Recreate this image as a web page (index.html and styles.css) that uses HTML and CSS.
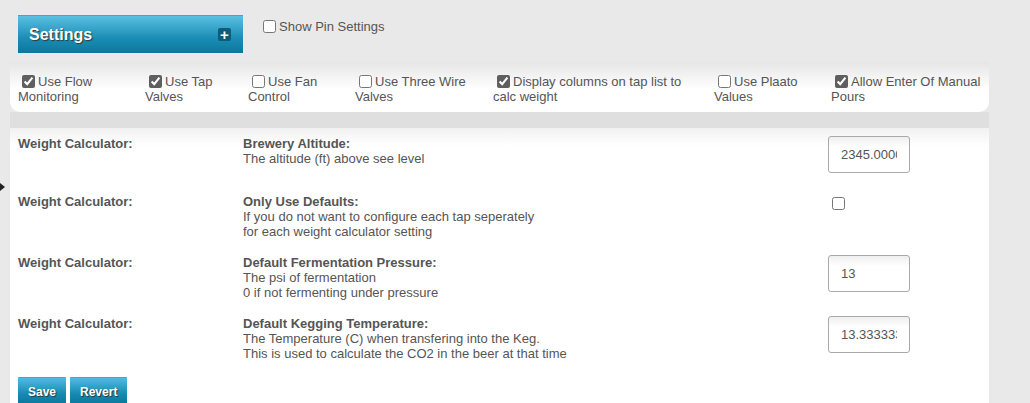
FILE: index.html
```html
<!DOCTYPE html>
<html>
<head>
    <title>Settings</title>
    <link rel="stylesheet" href="styles.css">
</head>
<body>
    <span class="pointer"></span>
    <div class="top-row">
        <div class="settings-bar">
            <span>Settings</span>
            <span class="plus">+</span>
        </div>
        <label class="pin-toggle"><input type="checkbox">Show Pin Settings</label>
    </div>

    <div class="panel">
        <div class="options">
            <label class="option"><input type="checkbox" checked>Use Flow Monitoring</label>
            <label class="option"><input type="checkbox" checked>Use Tap Valves</label>
            <label class="option"><input type="checkbox">Use Fan Control</label>
            <label class="option"><input type="checkbox">Use Three Wire Valves</label>
            <label class="option"><input type="checkbox" checked>Display columns on tap list to calc weight</label>
            <label class="option"><input type="checkbox">Use Plaato Values</label>
            <label class="option"><input type="checkbox" checked>Allow Enter Of Manual Pours</label>
        </div>
        <div class="divider"></div>
        <div class="content">
            <div class="config">
                <div class="config-group">Weight Calculator:</div>
                <div class="config-desc">
                    <b>Brewery Altitude:</b><br>
                    The altitude (ft) above see level
                </div>
                <div class="config-value"><input type="text" class="field" value="2345.0000"></div>

                <div class="config-group">Weight Calculator:</div>
                <div class="config-desc">
                    <b>Only Use Defaults:</b><br>
                    If you do not want to configure each tap seperately<br>
                    for each weight calculator setting
                </div>
                <div class="config-value"><input type="checkbox"></div>

                <div class="config-group">Weight Calculator:</div>
                <div class="config-desc">
                    <b>Default Fermentation Pressure:</b><br>
                    The psi of fermentation<br>
                    0 if not fermenting under pressure
                </div>
                <div class="config-value"><input type="text" class="field" value="13"></div>

                <div class="config-group">Weight Calculator:</div>
                <div class="config-desc">
                    <b>Default Kegging Temperature:</b><br>
                    The Temperature (C) when transfering into the Keg.<br>
                    This is used to calculate the CO2 in the beer at that time
                </div>
                <div class="config-value"><input type="text" class="field" value="13.333333"></div>
            </div>
            <div class="actions">
                <button class="btn">Save</button>
                <button class="btn">Revert</button>
            </div>
        </div>
    </div>
</body>
</html>
```

FILE: styles.css
```css
body {
    font-family: "Liberation Sans", Arial, sans-serif;
    font-size: 13px;
    line-height: 15px;
    color: #555;
    background-color: #e9e9e9;
    margin: 0;
    padding: 0;
}

input[type="checkbox"] {
    width: 13px;
    height: 13px;
    margin: 0 3px 0 4px;
    vertical-align: -2px;
    accent-color: #5f5f5f;
}

.pointer {
    position: absolute;
    left: 0;
    top: 183px;
    width: 0;
    height: 0;
    border-top: 4px solid transparent;
    border-bottom: 4px solid transparent;
    border-left: 5px solid #222;
}

.top-row {
    display: flex;
    align-items: flex-start;
    padding: 15px 0 0 18px;
    height: 62px;
    box-sizing: border-box;
}

.settings-bar {
    display: flex;
    justify-content: space-between;
    align-items: center;
    width: 225px;
    height: 38px;
    box-sizing: border-box;
    padding: 0 12px 0 11px;
    background: linear-gradient(to bottom, #5ac0e2, #1b8db5 60%, #0d779c);
    border-top: 1px solid #3aa9d2;
    color: #fff;
    font-size: 16px;
    font-weight: bold;
    text-shadow: 1px 1px 1px #333;
}

.plus {
    width: 13px;
    height: 13px;
    line-height: 13px;
    text-align: center;
    background-color: #0b5e7b;
    border-radius: 2px;
    font-size: 15px;
    text-shadow: none;
}

.pin-toggle {
    margin: 4px 0 0 16px;
}

.panel {
    margin-left: 10px;
    width: 979px;
}

.options {
    display: grid;
    grid-template-columns: 127px 103px 107px 138px 221px 117px 154px;
    padding: 12px 0 8px 8px;
    background: linear-gradient(to bottom, #e6e6e6, #fff 55%);
    border-radius: 0 0 10px 10px;
}

.option {
    display: block;
    padding-right: 8px;
}

.option:last-child {
    padding-right: 0;
}

.divider {
    height: 16px;
    background-color: #dfdfdf;
}

.content {
    padding: 8px 0 0 8px;
    background: linear-gradient(to bottom, #f1f1f1, #fff 18px);
}

.config {
    display: grid;
    grid-template-columns: 225px 585px 150px;
    row-gap: 16px;
}

.config-group {
    font-weight: bold;
}

.field {
    display: block;
    width: 82px;
    height: 37px;
    box-sizing: border-box;
    margin-bottom: 5px;
    padding: 0 12px;
    border: 1px solid #a9a9a9;
    border-radius: 3px;
    font-family: "Liberation Sans", Arial, sans-serif;
    font-size: 13px;
    color: #555;
    background: linear-gradient(to bottom, #efefef, #fff 10px);
}

.config-value input[type="checkbox"] {
    margin-top: 3px;
}

.actions {
    display: flex;
    gap: 4px;
    padding-top: 16px;
}

.btn {
    height: 28px;
    padding: 0 10px;
    border: none;
    border-top: 1px solid #3aa9d2;
    border-radius: 1px;
    background: linear-gradient(to bottom, #4fbbe0, #1689b1 60%, #0b7599);
    color: #fff;
    font-family: "Liberation Sans", Arial, sans-serif;
    font-size: 12px;
    font-weight: bold;
    text-shadow: 1px 1px 1px #333;
    cursor: pointer;
}
```
